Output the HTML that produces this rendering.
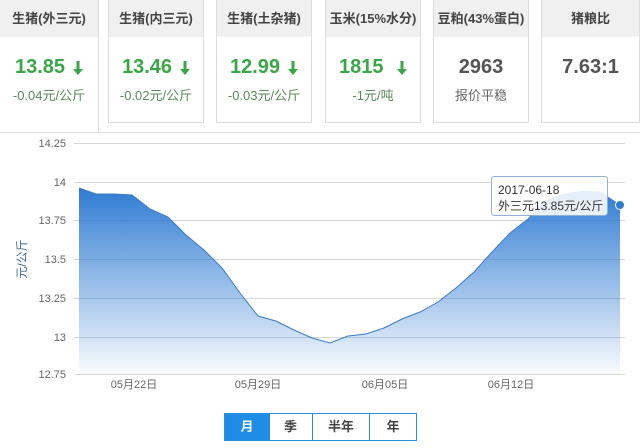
<!DOCTYPE html><html><head><meta charset="utf-8"><style>
body{margin:0;width:642px;height:448px;background:#fff;font-family:"Liberation Sans","Noto Sans CJK SC",sans-serif;position:relative;overflow:hidden}
.c{position:absolute;top:0;width:96px;height:123px;border:1px solid #ddd;border-top:none;box-sizing:border-box;background:#fff;text-align:center}
.h{height:37px;background:#f0f0f0;line-height:37px;font-size:13px;font-weight:bold;color:#444}
.n{margin-top:17px;font-size:20px;font-weight:bold;color:#3aa648;height:26px;line-height:26px}
.n.g{color:#555}
.s{margin-top:5px;font-size:13px;color:#5a8a5a}
.s.g{color:#666}
.ar{display:inline-block;margin-left:8px;vertical-align:middle}
.tb{position:absolute;top:413px;height:28px;border:1px solid #2b8ee0;box-sizing:border-box;font-size:13px;font-weight:bold;color:#444;text-align:center;line-height:26px}
</style></head><body>
<div style="position:absolute;left:98px;right:2px;top:132px;border-top:1px solid #ddd"></div>
<div class="c" style="left:0;width:99px;height:133px;border-left:none"><div class="h">生猪(外三元)</div><div class="n">13.85<svg class="ar" width="10" height="14" viewBox="0 0 10 14"><path d="M3.5 0h3v8h3.5L5 14 0 8h3.5z" fill="#3aa648"/></svg></div><div class="s">-0.04元/公斤</div></div>
<div class="c" style="left:108px"><div class="h">生猪(内三元)</div><div class="n">13.46<svg class="ar" width="10" height="14" viewBox="0 0 10 14"><path d="M3.5 0h3v8h3.5L5 14 0 8h3.5z" fill="#3aa648"/></svg></div><div class="s">-0.02元/公斤</div></div>
<div class="c" style="left:216px"><div class="h">生猪(土杂猪)</div><div class="n">12.99<svg class="ar" width="10" height="14" viewBox="0 0 10 14"><path d="M3.5 0h3v8h3.5L5 14 0 8h3.5z" fill="#3aa648"/></svg></div><div class="s">-0.03元/公斤</div></div>
<div class="c" style="left:325px"><div class="h">玉米(15%水分)</div><div class="n">1815 <svg class="ar" width="10" height="14" viewBox="0 0 10 14"><path d="M3.5 0h3v8h3.5L5 14 0 8h3.5z" fill="#3aa648"/></svg></div><div class="s">-1元/吨</div></div>
<div class="c" style="left:433px"><div class="h">豆粕(43%蛋白)</div><div class="n g">2963</div><div class="s g">报价平稳</div></div>
<div class="c" style="left:541px;width:99px"><div class="h">猪粮比</div><div class="n g">7.63:1</div></div>
<svg style="position:absolute;left:0;top:135px" width="642" height="260" viewBox="0 135 642 260">
<defs><linearGradient id="g" x1="0" y1="0" x2="0" y2="1"><stop offset="0" stop-color="#2f7bd2"/><stop offset="1" stop-color="#2f7bd2" stop-opacity="0.03"/></linearGradient></defs>
<g stroke="#d6d6d6" stroke-width="1"><path d="M74 143.5H625M74 182.5H625M74 220.5H625M74 259.5H625M74 298.5H625M74 337.5H625M74 374.5H625"/></g>
<g font-size="11" fill="#666" text-anchor="end"><text x="66" y="147">14.25</text><text x="66" y="186">14</text><text x="66" y="224">13.75</text><text x="66" y="263">13.5</text><text x="66" y="302">13.25</text><text x="66" y="341">13</text><text x="66" y="378">12.75</text></g>
<text transform="translate(26 259) rotate(-90)" font-size="12" fill="#4a6a8a" text-anchor="middle">元/公斤</text>
<path d="M79 188L96 194L114 194L132 195L150 209L168 217L186 235L204 250L222 268L240 293L258 316L276 321L294 330L312 338L330 343L348 336L366 334L384 328L402 319L420 312L438 302L456 288L474 272L492 252L510 233L528 219L546 201L564 194L582 191L600 192L620 205L620 374L79 374Z" fill="url(#g)"/>
<path d="M79 188L96 194L114 194L132 195L150 209L168 217L186 235L204 250L222 268L240 293L258 316L276 321L294 330L312 338L330 343L348 336L366 334L384 328L402 319L420 312L438 302L456 288L474 272L492 252L510 233L528 219L546 201L564 194L582 191L600 192L620 205" fill="none" stroke="#3a7cc8" stroke-width="1"/>
<g font-size="11" fill="#666" text-anchor="middle"><text x="134" y="388">05月22日</text><text x="258" y="388">05月29日</text><text x="385" y="388">06月05日</text><text x="511" y="388">06月12日</text></g>
<rect x="491.5" y="176.5" width="116" height="39" rx="3" fill="#fff" fill-opacity="0.88" stroke="#8fb0d8"/>
<text x="498" y="194" font-size="12" fill="#333">2017-06-18</text>
<text x="498" y="210" font-size="12" fill="#333">外三元13.85元/公斤</text>
<circle cx="620" cy="205" r="4.5" fill="#2f7bd2" stroke="#fff" stroke-width="1"/>
</svg>
<div class="tb" style="left:224px;width:46px;background:#1f8ce6;color:#fff">月</div>
<div class="tb" style="left:269px;width:44px;border-left:none">季</div>
<div class="tb" style="left:312px;width:58px">半年</div>
<div class="tb" style="left:369px;width:48px">年</div>
</body></html>
